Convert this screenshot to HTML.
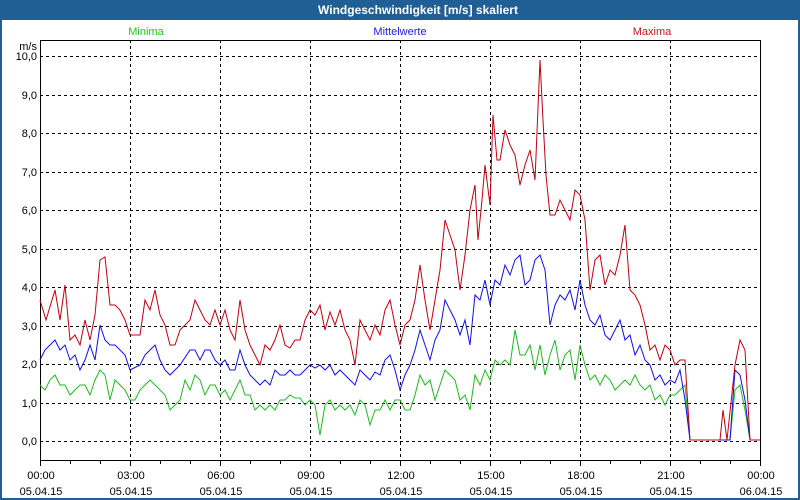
<!DOCTYPE html>
<html><head><meta charset="utf-8"><style>
html,body{margin:0;padding:0;width:800px;height:500px;overflow:hidden;background:#fff}
svg{display:block;font-family:"Liberation Sans","DejaVu Sans",sans-serif}
</style></head><body>
<svg width="800" height="500" viewBox="0 0 800 500" xmlns="http://www.w3.org/2000/svg">
<rect x="0" y="0" width="800" height="500" fill="#1f5f95"/>
<rect x="2" y="20" width="796" height="478" fill="#fff"/>
<text x="418" y="14" fill="#fff" font-size="12" font-weight="bold" text-anchor="middle">Windgeschwindigkeit [m/s] skaliert</text>
<text x="146" y="35" fill="#22c422" font-size="11" text-anchor="middle">Minima</text>
<text x="400" y="35" fill="#2020e0" font-size="11" text-anchor="middle">Mittelwerte</text>
<text x="652" y="35" fill="#c01818" font-size="11" text-anchor="middle">Maxima</text>
<g font-size="11" fill="#000" text-anchor="end">
<text x="37" y="50">m/s</text>
<text x="37" y="60">10,0</text><text x="37" y="99">9,0</text><text x="37" y="137">8,0</text><text x="37" y="176">7,0</text><text x="37" y="214">6,0</text><text x="37" y="253">5,0</text><text x="37" y="291">4,0</text><text x="37" y="330">3,0</text><text x="37" y="368">2,0</text><text x="37" y="407">1,0</text><text x="37" y="445">0,0</text>
</g>
<g stroke="#000" stroke-width="1" stroke-dasharray="3,3" fill="none">
<path d="M40 56.5H760M40 95.5H760M40 133.5H760M40 172.5H760M40 210.5H760M40 249.5H760M40 287.5H760M40 326.5H760M40 364.5H760M40 403.5H760M40 441.5H760"/>
<path d="M130.5 40V460M220.5 40V460M310.5 40V460M400.5 40V460M490.5 40V460M580.5 40V460M670.5 40V460"/>
</g>
<g stroke="#000" stroke-width="1">
<path d="M70.5 460V464M100.5 460V464M160.5 460V464M190.5 460V464M250.5 460V464M280.5 460V464M340.5 460V464M370.5 460V464M430.5 460V464M460.5 460V464M520.5 460V464M550.5 460V464M610.5 460V464M640.5 460V464M700.5 460V464M730.5 460V464M40.5 460V466M130.5 460V466M220.5 460V466M310.5 460V466M400.5 460V466M490.5 460V466M580.5 460V466M670.5 460V466M760.5 460V466"/>
</g>
<rect x="40.5" y="40.5" width="720" height="420" fill="none" stroke="#000"/>
<g font-size="11" fill="#000" text-anchor="middle">
<text x="41" y="479">00:00</text><text x="131" y="479">03:00</text><text x="221" y="479">06:00</text><text x="311" y="479">09:00</text><text x="401" y="479">12:00</text><text x="491" y="479">15:00</text><text x="581" y="479">18:00</text><text x="671" y="479">21:00</text><text x="761" y="479">00:00</text>
<text x="41" y="495">05.04.15</text><text x="131" y="495">05.04.15</text><text x="221" y="495">05.04.15</text><text x="311" y="495">05.04.15</text><text x="401" y="495">05.04.15</text><text x="491" y="495">05.04.15</text><text x="581" y="495">05.04.15</text><text x="671" y="495">05.04.15</text><text x="761" y="495">06.04.15</text>
</g>
<polyline fill="none" stroke="#22b822" stroke-width="1" points="40,385 45,390 50,380 55,375 60,385 65,385 70,395 75,390 80,385 85,385 90,395 95,380 100,370 105,375 110,400 115,380 120,385 125,390 130,400 135,400 140,390 145,385 150,380 155,385 160,390 165,395 170,410 175,405 180,400 185,380 190,390 195,375 200,380 205,395 210,385 215,385 220,395 225,390 230,400 235,390 240,380 245,395 250,395 255,410 260,405 265,410 270,405 275,410 280,400 285,400 290,395 295,398 300,398 305,405 310,400 315,405 320,435 325,405 330,400 335,410 340,405 345,410 350,405 355,415 360,400 365,405 370,425 375,410 380,410 385,400 390,410 395,400 400,400 405,410 410,410 415,395 420,375 425,385 430,380 435,400 440,385 445,370 450,375 455,380 460,400 465,395 470,410 475,375 480,385 485,370 490,380 495,360 500,365 505,360 510,365 515,330 520,355 525,355 530,345 535,370 540,345 545,375 550,355 555,340 560,370 565,355 570,350 575,380 580,345 585,365 590,380 595,375 600,385 605,375 610,380 615,390 620,385 625,380 630,385 635,375 640,385 645,390 650,385 655,400 660,395 665,405 670,395 675,395 680,390 685,385 690,440 730,440 735,390 740,385 745,410 750,440 760,440"/>
<polyline fill="none" stroke="#1010e8" stroke-width="1" points="40,360 45,350 50,345 55,340 60,350 65,345 70,360 75,355 80,370 85,360 90,345 95,360 100,325 105,340 110,345 115,345 120,350 125,355 130,370 140,365 145,355 150,350 155,345 160,360 165,370 170,375 175,370 180,365 190,350 195,350 200,360 205,350 210,350 215,360 220,365 225,360 230,370 235,370 240,350 245,365 250,375 255,380 260,385 265,380 270,385 275,370 280,375 285,375 290,370 295,375 300,375 305,370 310,365 315,368 320,365 325,370 330,365 335,375 340,370 345,375 350,380 355,385 360,370 365,375 370,380 375,372 380,375 385,360 390,355 395,370 400,390 405,375 410,365 415,350 420,330 425,345 430,360 435,340 440,330 445,300 450,310 455,320 460,335 465,320 470,345 475,295 480,300 485,280 490,305 495,280 500,285 505,265 510,275 515,260 520,255 525,285 530,280 535,260 540,255 545,270 550,325 555,305 560,295 565,300 570,290 575,310 580,280 585,305 590,320 595,325 600,315 605,335 610,340 615,330 620,320 625,340 630,335 635,355 640,345 645,360 650,365 655,380 660,375 665,385 670,380 675,383 680,370 685,400 690,440 730,440 735,370 740,375 745,400 750,440 760,440"/>
<polyline fill="none" stroke="#c00010" stroke-width="1" points="40,300 46,320 55,290 60,320 65,285 70,340 75,335 80,345 85,320 90,340 95,315 100,260 105,257 110,305 115,305 120,310 125,320 130,335 140,335 145,300 150,310 155,290 160,315 165,325 170,345 175,345 180,330 190,320 195,300 200,310 205,320 210,325 215,310 220,325 225,310 230,330 235,340 240,300 245,330 250,345 255,355 260,365 265,345 270,350 275,340 280,325 285,345 290,348 295,340 300,340 305,320 310,310 315,315 320,305 325,330 330,312 335,325 340,310 345,330 350,340 355,365 360,320 365,330 370,340 375,325 380,335 385,310 390,300 395,325 400,345 405,325 410,320 415,300 420,265 425,300 430,330 435,300 440,270 445,220 450,235 455,250 460,290 465,255 470,210 475,185 478,240 482,200 485,165 490,205 493,115 497,160 500,160 505,130 510,145 515,155 520,185 525,165 530,150 535,180 540,60 543,120 546,175 550,215 555,215 560,200 565,210 570,220 575,190 580,195 585,220 590,290 595,260 600,255 605,285 610,270 615,275 620,255 625,225 630,290 635,295 640,305 645,325 650,350 655,345 660,360 665,345 670,350 675,365 680,360 685,360 690,440 720,440 723,410 727,440 735,365 740,340 745,350 750,440 760,440"/>
</svg>
</body></html>
